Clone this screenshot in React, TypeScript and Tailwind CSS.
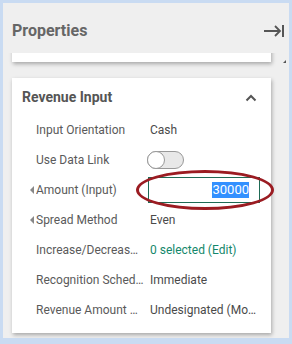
import React from 'react';

const rows: { label: string; value?: string; kind?: 'text' | 'toggle' | 'input' | 'link'; caret?: boolean }[] = [
    { label: 'Input Orientation', value: 'Cash' },
    { label: 'Use Data Link', kind: 'toggle' },
    { label: 'Amount (Input)', value: '30000', kind: 'input', caret: true },
    { label: 'Spread Method', value: 'Even', caret: true },
    { label: 'Increase/Decrease Rules', value: '0 selected (Edit)', kind: 'link' },
    { label: 'Recognition Schedule', value: 'Immediate' },
    { label: 'Revenue Amount Designation', value: 'Undesignated (Model Level)' },
];

const App = () => {
    return (
        <div
            className="w-[292px] h-[344px] bg-[#c9dbf2] pt-[3px] pl-[3px] pr-[3px] pb-[6px] overflow-hidden"
            style={{ fontFamily: 'Roboto, "Liberation Sans", sans-serif' }}
        >
            <div className="h-full bg-[#efefef] flex flex-col">
                {/* Header */}
                <div className="h-[50px] shrink-0 flex items-center justify-between pl-[9px] pr-[4px] pt-[5px]">
                    <h1 className="text-[16px] font-bold text-[#666666]">Properties</h1>
                    <svg width="22" height="14" viewBox="0 0 22 14" className="text-[#555]">
                        <path d="M1 7h16M12 2l5 5-5 5" fill="none" stroke="currentColor" strokeWidth="1.8" />
                        <path d="M20 1v12" stroke="currentColor" strokeWidth="2" />
                    </svg>
                </div>

                {/* Scroll area */}
                <div className="flex-1 flex min-h-0">
                    <div className="flex-1 overflow-hidden pl-[9px] pr-[9px]">
                        <div className="-mt-[30px]">
                            <div className="h-[39px] bg-white shadow-[1px_2px_4px_rgba(0,0,0,0.3)]" />

                            <div className="mt-[16px] bg-white shadow-[1px_2px_4px_rgba(0,0,0,0.3)] pb-[8px]">
                                <div className="h-[37px] flex items-center justify-between pl-[10px] pr-[14px] pt-[2px]">
                                    <span className="text-[14px] font-bold text-[#555555]">Revenue Input</span>
                                    <svg width="12" height="8" viewBox="0 0 12 8">
                                        <path d="M1.5 6.5L6 2l4.5 4.5" fill="none" stroke="#555" strokeWidth="2" />
                                    </svg>
                                </div>
                                <div>
                                    {rows.map((r) => (
                                        <div key={r.label} className="h-[30px] flex items-center text-[12px]">
                                            <div className="w-[24px] shrink-0 flex justify-end pr-[2px]">
                                                {r.caret && (
                                                    <span className="block w-0 h-0 border-y-[4px] border-y-transparent border-r-[4px] border-r-[#888]" />
                                                )}
                                            </div>
                                            <div className="w-[114px] shrink-0 pr-[6px]">
                                                <div className="truncate text-[#5a5a5a]">{r.label}</div>
                                            </div>
                                            <div className="flex-1 min-w-0 pr-[14px]">
                                                {r.kind === 'toggle' ? (
                                                    <div className="w-[37px] h-[18px] -ml-[3px] rounded-full border border-[#999] bg-[#e8e8e8] relative">
                                                        <div className="absolute -left-[1px] -top-[1px] w-[18px] h-[18px] rounded-full bg-white border border-[#999]" />
                                                    </div>
                                                ) : r.kind === 'input' ? (
                                                    <div className="relative">
                                                        <div className="w-[112px] h-[26px] -ml-[2px] border border-[#1e6b55] flex items-center justify-end pr-[10px]">
                                                            <span className="bg-[#3390ff] text-white text-[13px] leading-[16px]">{r.value}</span>
                                                        </div>
                                                        <div className="absolute -left-[14px] -top-[7px] w-[138px] h-[40px] rounded-[50%] border-[3px] border-[#9b1c22]" />
                                                    </div>
                                                ) : (
                                                    <div className={`truncate ${r.kind === 'link' ? 'text-[#14876b]' : 'text-[#4a4a4a]'}`}>{r.value}</div>
                                                )}
                                            </div>
                                        </div>
                                    ))}
                                </div>
                            </div>
                        </div>
                    </div>
                    {/* Scrollbar */}
                    <div className="w-[9px] shrink-0 pt-[7px] flex justify-center">
                        <span className="block w-0 h-0 border-l-[3px] border-l-transparent border-b-[3px] border-b-[#555]" />
                    </div>
                </div>
            </div>
        </div>
    );
};

export default App;
